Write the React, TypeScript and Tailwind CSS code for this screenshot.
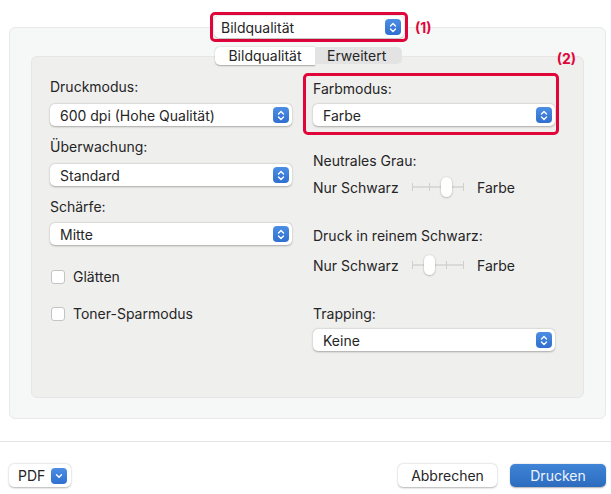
import { ReactNode } from 'react';

function Stepper() {
  return (
    <span className="w-[16px] h-[16px] rounded-[4px] bg-gradient-to-b from-[#4d8ee4] to-[#2f6fcf] flex items-center justify-center shrink-0">
      <svg width="8" height="11" viewBox="0 0 8 11" fill="none">
        <path d="M1.5 4 L4 1.5 L6.5 4" stroke="white" strokeWidth="1.4" strokeLinecap="round" strokeLinejoin="round" />
        <path d="M1.5 7 L4 9.5 L6.5 7" stroke="white" strokeWidth="1.4" strokeLinecap="round" strokeLinejoin="round" />
      </svg>
    </span>
  );
}

function Select({ value, className = '' }: { value: string; className?: string }) {
  return (
    <div className={`h-[22px] bg-white rounded-[5px] shadow-[0_0.5px_2px_rgba(0,0,0,0.3)] flex items-center justify-between pr-[3px] ${className}`}>
      <span className="text-[14px] text-[#252525]">{value}</span>
      <Stepper />
    </div>
  );
}

function Label({ children, className = '' }: { children: ReactNode; className?: string }) {
  return <div className={`h-[17px] leading-[17px] text-[14px] text-[#252525] whitespace-nowrap ${className}`}>{children}</div>;
}

function Checkbox({ label, className = '' }: { label: string; className?: string }) {
  return (
    <div className={`flex items-center h-[17px] ${className}`}>
      <span className="w-[14px] h-[14px] ml-[1px] bg-white rounded-[3px] border border-[#c4c4c4]" />
      <span className="ml-[8px] text-[14px] text-[#252525]">{label}</span>
    </div>
  );
}

function Slider({ pos }: { pos: number }) {
  const ticks = [0, 1, 2, 3];
  return (
    <div className="relative w-[52px] h-[20px] shrink-0">
      <div className="absolute left-0 right-0 top-[9px] h-[2px] bg-[#dadada]" />
      {ticks.map((t) => (
        <div key={t} className="absolute top-[6px] w-[1px] h-[8px] bg-[#cfcfcf]" style={{ left: t * 17 }} />
      ))}
      <div
        className="absolute top-0 w-[11px] h-[20px] rounded-full bg-white shadow-[0_0.5px_2px_rgba(0,0,0,0.35)]"
        style={{ left: pos * 17 - 5 }}
      />
    </div>
  );
}

function SliderRow({ pos, className = '' }: { pos: number; className?: string }) {
  return (
    <div className={`flex items-center h-[20px] text-[14px] text-[#252525] whitespace-nowrap ${className}`}>
      <span className="w-[99px] shrink-0">Nur Schwarz</span>
      <Slider pos={pos} />
      <span className="ml-[13px]">Farbe</span>
    </div>
  );
}

export default function App() {
  return (
    <div className="w-[611px] h-[494px] bg-white relative font-['Inter','Liberation_Sans',sans-serif] overflow-hidden">
      {/* preset popup */}
      <div className="relative z-10 flex items-center pt-[12px] pl-[210px]">
        <div className="w-[198px] h-[30px] border-[3px] border-[#e0063a] rounded-[5px] bg-white flex items-center px-[1px]">
          <Select value="Bildqualität" className="w-full h-[22px] pl-[7px]" />
        </div>
        <span className="ml-[7px] text-[14px] font-bold text-[#e0063a]">(1)</span>
      </div>

      {/* outer panel */}
      <div className="mt-[-15px] ml-[9px] w-[597px] h-[392px] bg-[#f6f7f7] border border-[#e9e9e9] rounded-[6px] pt-[19px] px-[21px]">
        <div className="relative z-10 flex items-center h-[17px] pl-[184px]">
          <div className="h-[18px] w-[100px] bg-white rounded-l-[5px] shadow-[0_0.5px_1.5px_rgba(0,0,0,0.3)] flex items-center justify-center text-[14px] text-[#252525]">
            Bildqualität
          </div>
          <div className="h-[17px] w-[87px] bg-[#e3e3e3] rounded-r-[5px] flex items-center pl-[12px] text-[14px] text-[#252525]">
            Erweitert
          </div>
          <span className="ml-auto mr-[8px] mt-[6px] text-[14px] font-bold text-[#e0063a]">(2)</span>
        </div>

        <div className="mt-[-8px] w-[553px] h-[342px] bg-[#efefee] rounded-[6px] border border-[#e6e6e6] flex">
          {/* left column */}
          <div className="w-[242px] ml-[18px] pt-[21px] flex flex-col">
            <Label>Druckmodus:</Label>
            <Select value="600 dpi (Hohe Qualität)" className="mt-[9px] pl-[10px]" />
            <Label className="mt-[12px]">Überwachung:</Label>
            <Select value="Standard" className="mt-[9px] pl-[10px]" />
            <Label className="mt-[12px]">Schärfe:</Label>
            <Select value="Mitte" className="mt-[8px] pl-[10px]" />
            <Checkbox label="Glätten" className="mt-[23px]" />
            <Checkbox label="Toner-Sparmodus" className="mt-[20px]" />
          </div>

          {/* right column */}
          <div className="w-[256px] ml-[11px] pt-[16px] flex flex-col">
            <div className="w-[256px] h-[62px] border-[3px] border-[#e0063a] rounded-[5px] pl-[7px] pr-[1px] pt-[4px]">
              <Label>Farbmodus:</Label>
              <Select value="Farbe" className="mt-[7px] pl-[10px]" />
            </div>
            <div className="pl-[10px] pr-[4px] flex flex-col">
              <Label className="mt-[17px]">Neutrales Grau:</Label>
              <SliderRow pos={2} className="mt-[8px]" />
              <Label className="mt-[30px]">Druck in reinem Schwarz:</Label>
              <SliderRow pos={1} className="mt-[11px]" />
              <Label className="mt-[30px]">Trapping:</Label>
              <Select value="Keine" className="mt-[7px] pl-[10px]" />
            </div>
          </div>
        </div>
      </div>

      {/* footer */}
      <div className="mt-[22px] h-px bg-[#e3e3e3]" />
      <div className="flex items-center pl-[9px] pr-[5px] mt-[22px]">
        <div className="h-[23px] w-[62px] bg-white rounded-[5px] shadow-[0_0.5px_2px_rgba(0,0,0,0.3)] flex items-center pl-[9px] pr-[4px] justify-between">
          <span className="text-[14px] text-[#252525]">PDF</span>
          <span className="w-[16px] h-[16px] rounded-[4px] bg-gradient-to-b from-[#4d8ee4] to-[#2f6fcf] flex items-center justify-center">
            <svg width="8" height="6" viewBox="0 0 8 6" fill="none">
              <path d="M1.5 1.8 L4 4.3 L6.5 1.8" stroke="white" strokeWidth="1.4" strokeLinecap="round" strokeLinejoin="round" />
            </svg>
          </span>
        </div>
        <div className="ml-auto h-[23px] w-[99px] bg-white rounded-[5px] shadow-[0_0.5px_2px_rgba(0,0,0,0.3)] flex items-center justify-center text-[14px] text-[#252525]">
          Abbrechen
        </div>
        <div className="ml-[13px] h-[23px] w-[96px] rounded-[5px] bg-gradient-to-b from-[#3f84d6] to-[#2c6cbf] flex items-center justify-center text-[14px] text-[#eef4ff] shadow-[0_0.5px_1.5px_rgba(0,0,0,0.3)]">
          Drucken
        </div>
      </div>
    </div>
  );
}
